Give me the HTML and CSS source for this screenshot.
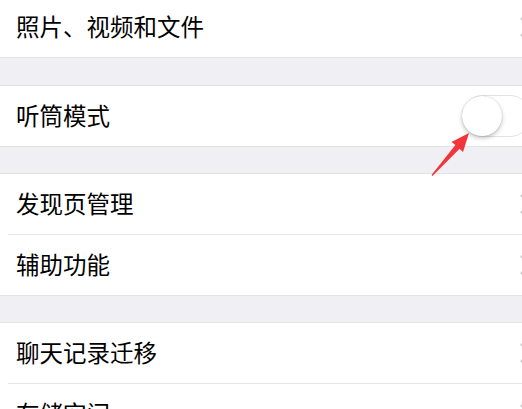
FILE: index.html
```html
<!DOCTYPE html>
<html lang="zh-CN">
  <head>
    <meta charset="UTF-8" />
    <meta name="viewport" content="width=device-width, initial-scale=1" />
    <title>通用</title>
    <link rel="stylesheet" href="styles.css">
  </head>
  <body>
    <div class="page">
      <div class="group first">
        <div class="row">
          <span class="label">照片、视频和文件</span>
          <svg class="chevron" width="14" height="22" viewBox="0 0 14 22"><path d="M2 2 L11 11 L2 20" fill="none" stroke="#c7c7cc" stroke-width="2.4"/></svg>
        </div>
      </div>

      <div class="gap tall"></div>

      <div class="group">
        <div class="row">
          <span class="label">听筒模式</span>
          <div class="switch"><div class="knob"></div></div>
        </div>
      </div>

      <div class="gap"></div>

      <div class="group">
        <div class="row">
          <span class="label">发现页管理</span>
          <svg class="chevron" width="14" height="22" viewBox="0 0 14 22"><path d="M2 2 L11 11 L2 20" fill="none" stroke="#c7c7cc" stroke-width="2.4"/></svg>
        </div>
        <div class="row">
          <span class="label">辅助功能</span>
          <svg class="chevron" width="14" height="22" viewBox="0 0 14 22"><path d="M2 2 L11 11 L2 20" fill="none" stroke="#c7c7cc" stroke-width="2.4"/></svg>
        </div>
      </div>

      <div class="gap"></div>

      <div class="group">
        <div class="row">
          <span class="label">聊天记录迁移</span>
          <svg class="chevron" width="14" height="22" viewBox="0 0 14 22"><path d="M2 2 L11 11 L2 20" fill="none" stroke="#c7c7cc" stroke-width="2.4"/></svg>
        </div>
        <div class="row">
          <span class="label">存储空间</span>
          <svg class="chevron" width="14" height="22" viewBox="0 0 14 22"><path d="M2 2 L11 11 L2 20" fill="none" stroke="#c7c7cc" stroke-width="2.4"/></svg>
        </div>
      </div>

      <!-- red pointer drawn over the screenshot -->
      <svg class="arrow" width="522" height="409" viewBox="0 0 522 409">
        <polygon points="469,136 463,155 459.6,151.8 432.5,179 431.5,178 455.4,148 451.5,145" fill="#f2353a"/>
      </svg>
    </div>
  </body>
</html>
```

FILE: styles.css
```css
* {
  margin: 0;
  padding: 0;
  box-sizing: border-box;
}
html,
body {
  width: 522px;
  height: 409px;
  overflow: hidden;
}
body {
  font-family: "Noto Sans CJK SC", "Noto Sans", sans-serif;
  background: #efeff4;
  color: #000;
}
.page {
  position: relative;
  height: 100%;
}
.group {
  background: #fff;
}
.group.first {
  margin-top: -3px;
}
.gap {
  height: 28px;
  border-top: 1px solid #e4e4e8;
  border-bottom: 1px solid #e4e4e8;
}
.gap.tall {
  height: 29px;
}
.row {
  height: 60px;
  display: flex;
  align-items: center;
  justify-content: space-between;
  padding-left: 16px;
}
.row + .row {
  height: 61px;
  border-top: 1px solid #e6e6e8;
  margin-left: 8px;
  padding-left: 8px;
}
.label {
  font-size: 23.5px;
  line-height: 1;
}
.chevron {
  margin-right: -11px;
  flex-shrink: 0;
}
.switch {
  width: 69px;
  height: 42px;
  margin-right: -9px;
  border-radius: 21px;
  border: 1.5px solid #e3e3e7;
  background: #fff;
  flex-shrink: 0;
}
.knob {
  width: 40px;
  height: 40px;
  margin-top: -0.5px;
  margin-left: -1px;
  border-radius: 50%;
  background: #fff;
  box-shadow: 0 2px 4px rgba(0, 0, 0, 0.25), 0 0 1px rgba(0, 0, 0, 0.2);
}
.arrow {
  position: absolute;
  left: 0;
  top: 0;
  pointer-events: none;
}
```
